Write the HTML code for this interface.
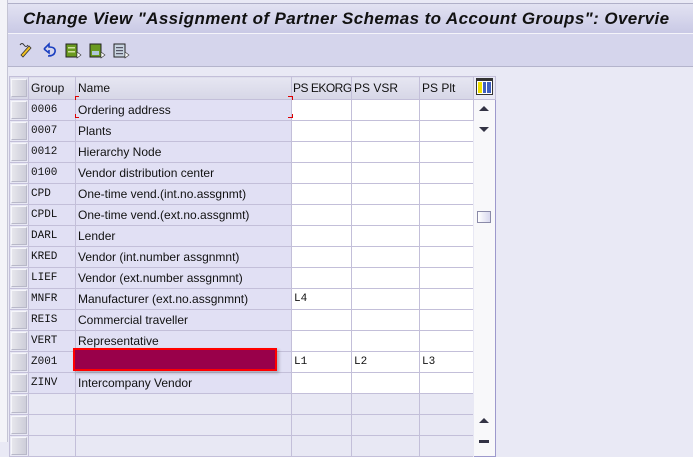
<!DOCTYPE html>
<html><head><style>
*{margin:0;padding:0;box-sizing:border-box}
body{width:693px;height:442px;overflow:hidden;background:#e9e9f5;font-family:"Liberation Sans",sans-serif;position:relative}
.abs{position:absolute}
#title{left:8px;top:3px;width:685px;height:31px;background:linear-gradient(#e2e2f2,#c9c9e5);border-top:1px solid #b0b0c8;border-bottom:1px solid #f4f4fa}
#title span{position:absolute;left:15px;top:5px;font-size:17px;font-weight:bold;font-style:italic;color:#111;letter-spacing:0.4px;white-space:nowrap}
#tb{left:8px;top:34px;width:685px;height:33px;background:#d5d5ec;border-bottom:1px solid #b4b4cc}
#lstrip{left:0;top:0;width:8px;height:442px;background:#f3f3f8;border-right:1px solid #c4c4d4}
table{position:absolute;left:9px;top:76px;width:486px;border-collapse:collapse;table-layout:fixed;border:1px solid #9d99cc}
td{height:21px;border:1px solid #c3bfd9;font-size:12px;color:#111;padding:0 0 0 2px;white-space:nowrap;overflow:hidden;background:#fff}
tr.h td{height:21px;background:linear-gradient(#e6e6f2,#d6d6e6);border-color:#c3bfd9}
td.s{padding:0;background:#e8e8f4}
td.s div{margin:1px;height:18px;background:linear-gradient(90deg,#e6e6ec,#cdcdd9);border:1px solid #f6f6fa;border-right-color:#b8b8c8;border-bottom-color:#b8b8c8}
td.g{background:#e1e0f4;font-family:"Liberation Mono",monospace;font-size:11px}
td.n{background:#e1e0f4}
td.m{font-family:"Liberation Mono",monospace;font-size:11px}
tr.e td{background:#e8e8f4}
td.sc{background:#f8f8fa;border:none;border-left:1px solid #e8e8f4;padding:0}
</style></head><body>
<div id="lstrip" class="abs"></div>
<div id="title" class="abs"><span>Change View "Assignment of Partner Schemas to Account Groups": Overvie</span></div>
<div id="tb" class="abs">
<svg width="130" height="20" style="position:absolute;left:10px;top:7px">
<path d="M3 14 L11 5 L13 7 L5 16 Z" fill="#f0c020" stroke="#333" stroke-width="0.8"/><path d="M2 4 q2-3 4 0 q2 3 4 0" fill="none" stroke="#333" stroke-width="1"/>
<path d="M26 8 L31 3 L31 6 Q38 6 37 11 Q36 15 30 15" fill="none" stroke="#1a3fc0" stroke-width="1.6"/><path d="M26 8 L31 12 L31 9" fill="none" stroke="#1a3fc0" stroke-width="1.6"/>
<rect x="48" y="3" width="11" height="13" fill="#6a9a20" stroke="#222"/><rect x="50" y="6" width="7" height="1.5" fill="#d0e0a0"/><rect x="50" y="10" width="7" height="1.5" fill="#d0e0a0"/><path d="M59 11 l4 3 l-4 3z" fill="#fff" stroke="#333" stroke-width="0.6"/>
<rect x="72" y="3" width="11" height="13" fill="#6a9a20" stroke="#222"/><rect x="74" y="10" width="7" height="4" fill="#b0c8d8"/><path d="M83 11 l4 3 l-4 3z" fill="#fff" stroke="#333" stroke-width="0.6"/>
<rect x="96" y="3" width="11" height="13" fill="#c8d4e0" stroke="#222"/><rect x="98" y="6" width="7" height="1.2" fill="#556"/><rect x="98" y="9" width="7" height="1.2" fill="#556"/><rect x="98" y="12" width="7" height="1.2" fill="#556"/><path d="M107 11 l4 3 l-4 3z" fill="#fff" stroke="#333" stroke-width="0.6"/>
</svg></div>
<table>
<colgroup><col style="width:19px"><col style="width:47px"><col style="width:216px"><col style="width:60px"><col style="width:68px"><col style="width:54px"><col style="width:22px"></colgroup>
<tr class="h"><td class="s"><div></div></td><td>Group</td><td>Name</td><td style="letter-spacing:-0.5px;padding-left:1px">PS EKORG</td><td>PS VSR</td><td>PS Plt</td><td style="background:#e9e9f5;padding:1px 2px"><svg width="17" height="17"><rect x="0.5" y="0.5" width="16" height="16" fill="#fff" stroke="#333"/><rect x="2" y="4" width="4" height="11" fill="#f0e000"/><rect x="7" y="4" width="3" height="11" fill="#4060c0"/><rect x="11" y="4" width="4" height="11" fill="#4060c0"/><rect x="1" y="1" width="15" height="2" fill="#333"/></svg></td></tr>
<tr><td class="s"><div></div></td><td class="g">0006</td><td class="n">Ordering address</td><td></td><td></td><td></td><td class="sc" rowspan="17" style="vertical-align:top;position:relative"><div style="position:absolute;left:5px;top:6px;width:0;height:0;border:5px solid transparent;border-bottom:5px solid #334;border-top:none"></div><div style="position:absolute;left:5px;top:27px;width:0;height:0;border:5px solid transparent;border-top:5px solid #334;border-bottom:none"></div><div style="position:absolute;left:3px;top:111px;width:14px;height:12px;border:1px solid #8a8aa8;background:linear-gradient(90deg,#fff,#d8d8ee)"></div><div style="position:absolute;left:5px;top:318px;width:0;height:0;border:5px solid transparent;border-bottom:5px solid #334;border-top:none"></div><div style="position:absolute;left:5px;top:340px;width:10px;height:3px;background:#334"></div></td></tr>
<tr><td class="s"><div></div></td><td class="g">0007</td><td class="n">Plants</td><td></td><td></td><td></td></tr>
<tr><td class="s"><div></div></td><td class="g">0012</td><td class="n">Hierarchy Node</td><td></td><td></td><td></td></tr>
<tr><td class="s"><div></div></td><td class="g">0100</td><td class="n">Vendor distribution center</td><td></td><td></td><td></td></tr>
<tr><td class="s"><div></div></td><td class="g">CPD</td><td class="n">One-time vend.(int.no.assgnmt)</td><td></td><td></td><td></td></tr>
<tr><td class="s"><div></div></td><td class="g">CPDL</td><td class="n">One-time vend.(ext.no.assgnmt)</td><td></td><td></td><td></td></tr>
<tr><td class="s"><div></div></td><td class="g">DARL</td><td class="n">Lender</td><td></td><td></td><td></td></tr>
<tr><td class="s"><div></div></td><td class="g">KRED</td><td class="n">Vendor (int.number assgnmnt)</td><td></td><td></td><td></td></tr>
<tr><td class="s"><div></div></td><td class="g">LIEF</td><td class="n">Vendor (ext.number assgnmnt)</td><td></td><td></td><td></td></tr>
<tr><td class="s"><div></div></td><td class="g">MNFR</td><td class="n">Manufacturer (ext.no.assgnmnt)</td><td class="m">L4</td><td></td><td></td></tr>
<tr><td class="s"><div></div></td><td class="g">REIS</td><td class="n">Commercial traveller</td><td></td><td></td><td></td></tr>
<tr><td class="s"><div></div></td><td class="g">VERT</td><td class="n">Representative</td><td></td><td></td><td></td></tr>
<tr><td class="s"><div></div></td><td class="g">Z001</td><td class="n"></td><td class="m">L1</td><td class="m">L2</td><td class="m">L3</td></tr>
<tr><td class="s"><div></div></td><td class="g">ZINV</td><td class="n">Intercompany Vendor</td><td></td><td></td><td></td></tr>
<tr class="e"><td class="s"><div></div></td><td></td><td></td><td></td><td></td><td></td></tr>
<tr class="e"><td class="s"><div></div></td><td></td><td></td><td></td><td></td><td></td></tr>
<tr class="e"><td class="s"><div></div></td><td></td><td></td><td></td><td></td><td></td></tr>
</table>
<div class="abs" style="left:73px;top:348px;width:204px;height:23px;background:#99004a;border:2px solid #f00;box-shadow:2px 2px 3px rgba(0,0,0,0.25)"></div>
<div class="abs" style="left:75px;top:96px;width:4px;height:4px;border-left:1px solid #d00;border-top:1px solid #d00"></div>
<div class="abs" style="left:75px;top:114px;width:4px;height:4px;border-left:1px solid #d00;border-bottom:1px solid #d00"></div>
<div class="abs" style="left:288px;top:96px;width:5px;height:4px;border-right:1px solid #d00;border-top:1px solid #d00"></div>
<div class="abs" style="left:288px;top:114px;width:5px;height:4px;border-right:1px solid #d00;border-bottom:1px solid #d00"></div>
</body></html>
